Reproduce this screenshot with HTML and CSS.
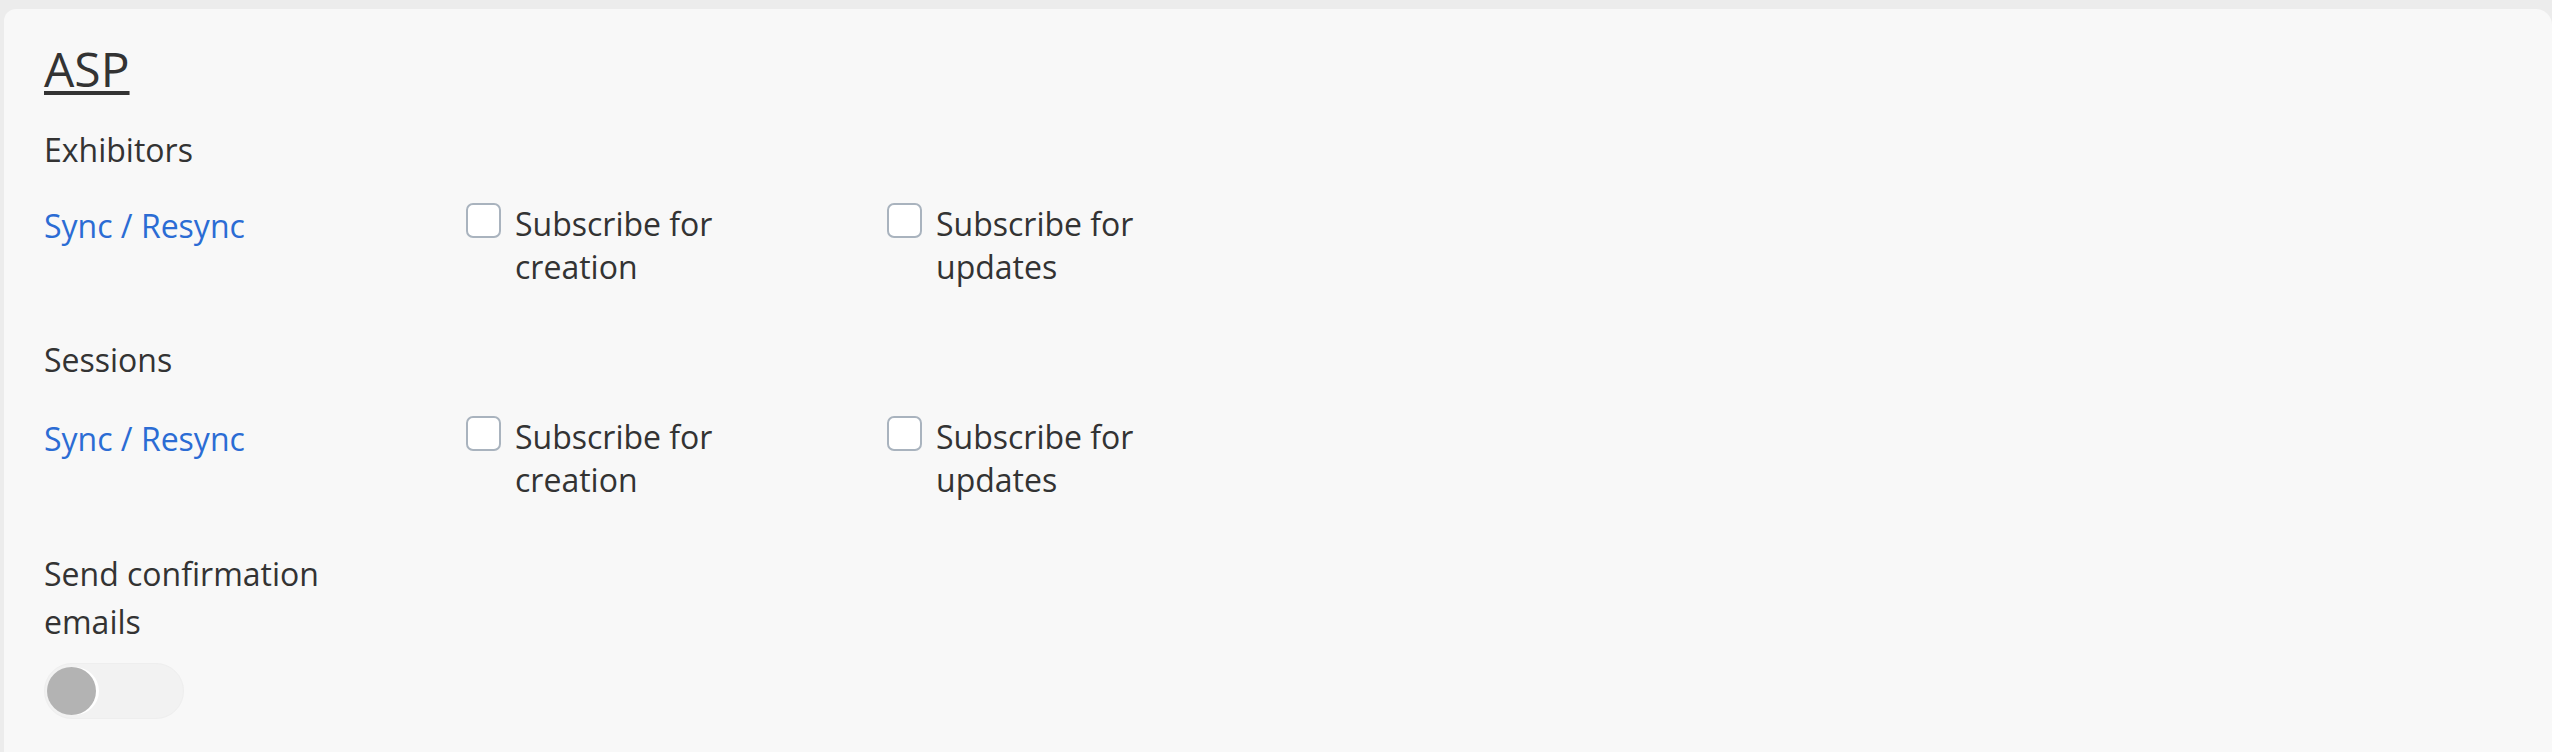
FILE: index.html
```html
<!DOCTYPE html>
<html lang="en">
<head>
<meta charset="utf-8">
<title>ASP</title>
<link rel="stylesheet" href="styles.css">
</head>
<body>
<div class="card">
  <h2 class="title">ASP</h2>

  <section class="group">
    <div class="label">Exhibitors</div>
    <div class="row">
      <a class="link" href="#">Sync / Resync</a>
      <label class="check"><span class="box"></span><span class="check-text">Subscribe for creation</span></label>
      <label class="check"><span class="box"></span><span class="check-text">Subscribe for updates</span></label>
    </div>
  </section>

  <section class="group">
    <div class="label">Sessions</div>
    <div class="row">
      <a class="link" href="#">Sync / Resync</a>
      <label class="check"><span class="box"></span><span class="check-text">Subscribe for creation</span></label>
      <label class="check"><span class="box"></span><span class="check-text">Subscribe for updates</span></label>
    </div>
  </section>

  <section class="confirm">
    <div class="label narrow">Send confirmation emails</div>
    <div class="toggle"><span class="knob"></span></div>
  </section>
</div>
</body>
</html>
```

FILE: styles.css
```css
html, body {
  margin: 0;
  padding: 0;
}
body {
  background: #ececec;
  font-family: "Open Sans", "Noto Sans", sans-serif;
  color: #333333;
  font-size: 32px;
  height: 752px;
  overflow: hidden;
}
.card {
  margin: 9px 0 0 4px;
  background: #f8f8f8;
  border-radius: 12px 16px 0 0;
  padding: 31px 40px 0 40px;
  min-height: 760px;
  box-sizing: border-box;
}
.title {
  margin: 0;
  font-size: 48px;
  font-weight: 400;
  line-height: 57.6px;
  text-decoration: underline;
  text-decoration-thickness: 4px;
  text-underline-offset: 4px;
  color: #333333;
}
.group {
  margin-top: 28px;
}
.group + .group {
  margin-top: 48px;
}
.label {
  line-height: 48px;
}
.row {
  margin-top: 28px;
  display: grid;
  grid-template-columns: 422px 421px 421px;
  align-items: start;
}
.group + .group .row {
  margin-top: 31px;
}
.link {
  color: #2b6cd4;
  text-decoration: none;
  line-height: 48px;
}
.check {
  display: flex;
  gap: 14px;
  align-items: flex-start;
}
.box {
  flex: none;
  width: 35px;
  height: 35px;
  box-sizing: border-box;
  border: 2px solid #a9b3be;
  border-radius: 7px;
  background: #ffffff;
  margin-top: 1px;
}
.check-text {
  width: 220px;
  line-height: 43px;
}
.confirm {
  margin-top: 49px;
}
.narrow {
  width: 300px;
}
.toggle {
  margin-top: 17px;
  width: 140px;
  height: 56px;
  box-sizing: border-box;
  border-radius: 28px;
  background: #f2f2f2;
  border: 1px solid #eeeeee;
  display: flex;
  align-items: center;
  padding-left: 2px;
}
.knob {
  width: 49px;
  height: 48px;
  border-radius: 50%;
  background: #b3b3b3;
  box-shadow: 3px 0 0 #ffffff;
}
```
